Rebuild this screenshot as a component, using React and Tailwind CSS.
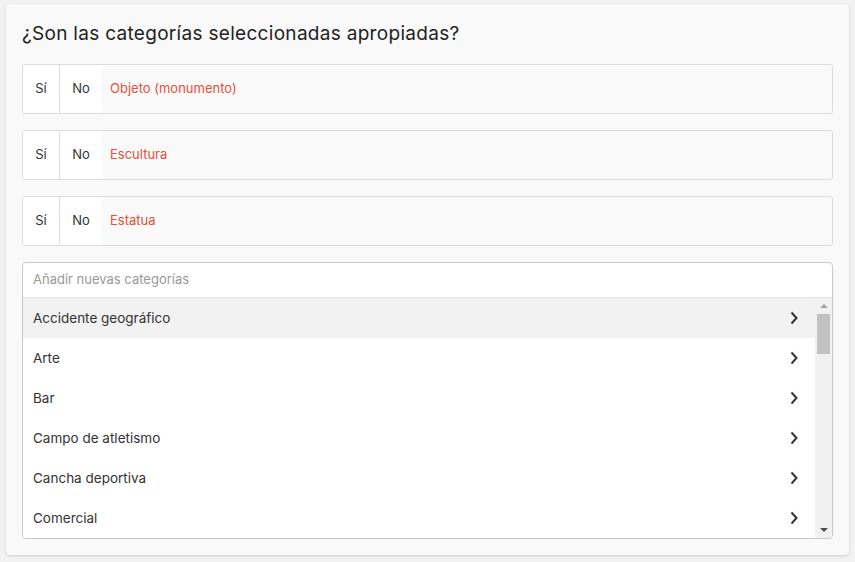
import React from "react";

const rows = ["Objeto (monumento)", "Escultura", "Estatua"];
const items = [
  "Accidente geográfico",
  "Arte",
  "Bar",
  "Campo de atletismo",
  "Cancha deportiva",
  "Comercial",
];

function Chevron() {
  return (
    <svg width="10" height="14" viewBox="0 0 10 14" className="shrink-0">
      <path d="M2.5 1.5 L7.5 7 L2.5 12.5" fill="none" stroke="#333" strokeWidth="2" />
    </svg>
  );
}

export default function App() {
  return (
    <div
      className="w-[855px] h-[562px] bg-[#f2f2f2] pt-[4px] px-[6px] overflow-hidden"
      style={{ fontFamily: "Inter, 'Noto Sans', sans-serif" }}
    >
      <div className="w-[843px] h-[551px] bg-[#f9f9f9] rounded-[4px] shadow-[0_1px_3px_rgba(0,0,0,0.15)] px-[16px] pt-[17px]">
        <h1 className="text-[19px] leading-[26px] text-[#222] tracking-[0.3px] font-normal">
          ¿Son las categorías seleccionadas apropiadas?
        </h1>
        <div className="mt-[17px] flex flex-col gap-[16px]">
          {rows.map((r) => (
            <div
              key={r}
              className="h-[50px] border border-[#dcdcdc] rounded-[3px] flex items-stretch overflow-hidden"
            >
              <div className="w-[37px] bg-white border-r border-[#dcdcdc] flex items-center justify-center text-[13px] text-[#333]">
                Sí
              </div>
              <div className="w-[42px] bg-white flex items-center justify-center text-[13px] text-[#333]">
                No
              </div>
              <div className="flex-1 flex items-center pl-[8px] text-[13px] text-[#e5503c]">
                {r}
              </div>
            </div>
          ))}
        </div>
        <div className="mt-[16px] h-[277px] border border-[#c8c8c8] rounded-[4px] bg-white flex flex-col overflow-hidden">
          <div className="h-[35px] shrink-0 border-b border-[#e2e2e2] flex items-center px-[10px] text-[13px] text-[#999]">
            Añadir nuevas categorías
          </div>
          <div className="flex flex-1 min-h-0">
            <div className="flex-1 overflow-hidden">
              {items.map((it, i) => (
                <div
                  key={it}
                  className={`h-[40px] flex items-center justify-between pl-[10px] pr-[16px] text-[13.5px] text-[#333] ${
                    i === 0 ? "bg-[#f2f2f2]" : "bg-white"
                  }`}
                >
                  <span>{it}</span>
                  <Chevron />
                </div>
              ))}
            </div>
            <div className="w-[17px] shrink-0 bg-[#f1f1f1] flex flex-col items-center">
              <div className="h-[16px] flex items-center justify-center">
                <div className="w-0 h-0 border-l-[4px] border-r-[4px] border-b-[4px] border-l-transparent border-r-transparent border-b-[#a3a3a3]" />
              </div>
              <div className="w-[13px] h-[40px] bg-[#c1c1c1]" />
              <div className="flex-1" />
              <div className="h-[16px] flex items-center justify-center">
                <div className="w-0 h-0 border-l-[4px] border-r-[4px] border-t-[4px] border-l-transparent border-r-transparent border-t-[#505050]" />
              </div>
            </div>
          </div>
        </div>
      </div>
    </div>
  );
}
